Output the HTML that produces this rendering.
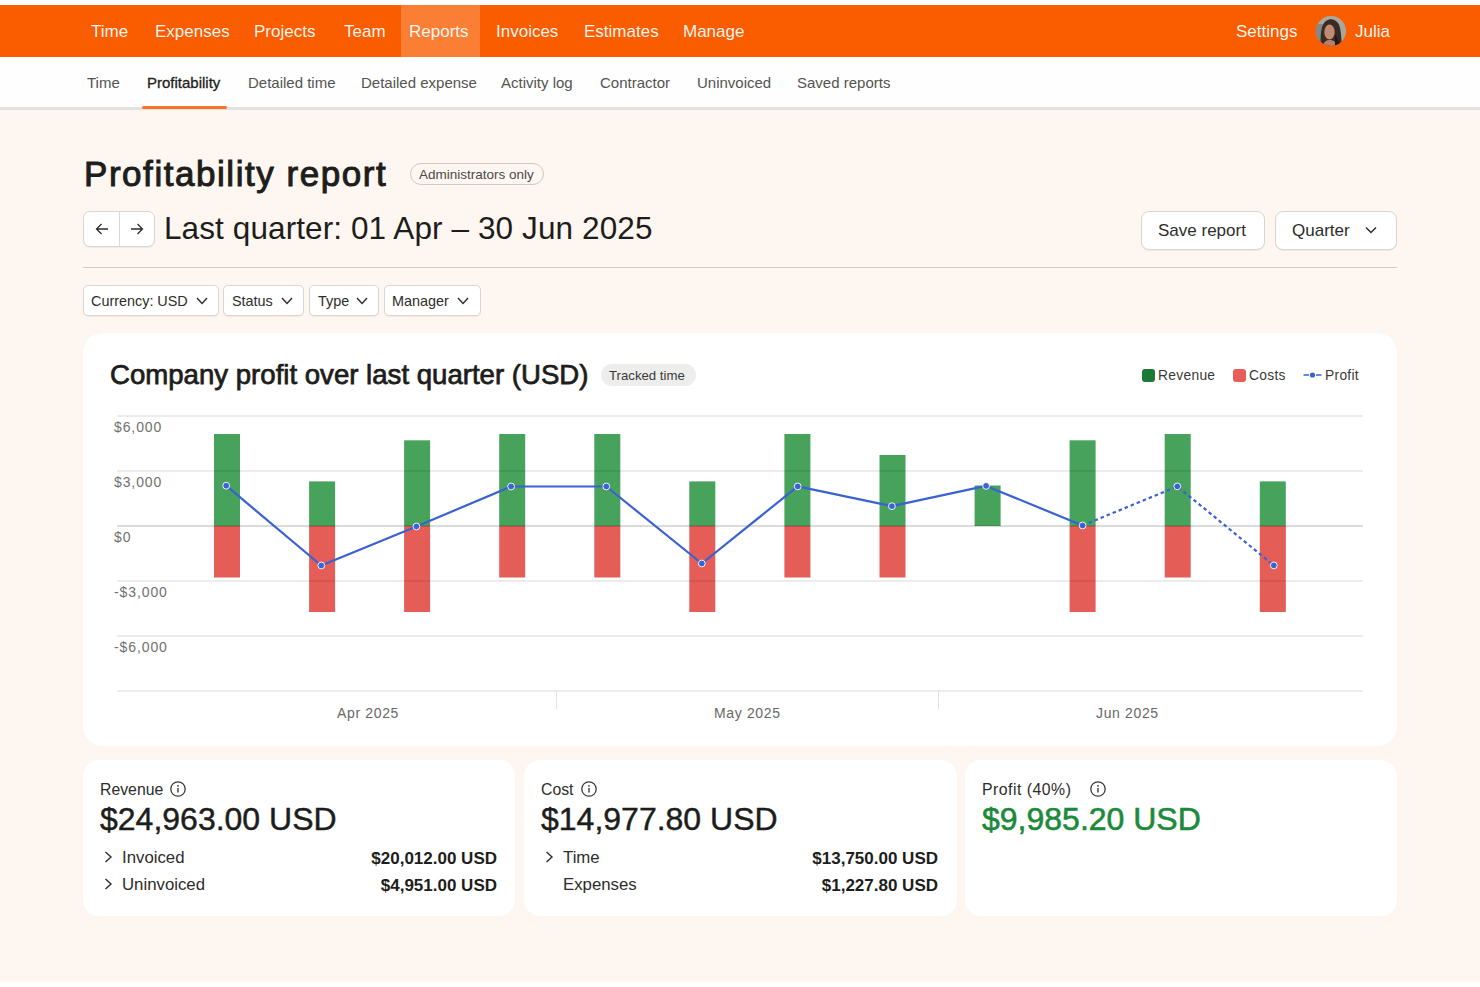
<!DOCTYPE html>
<html><head><meta charset="utf-8">
<style>
*{box-sizing:border-box;margin:0;padding:0}
html,body{width:1480px;height:987px;overflow:hidden;background:#fff;font-family:"Liberation Sans",sans-serif;color:#1d1d1b}
.a{position:absolute;white-space:nowrap;line-height:1}
#top{position:absolute;left:0;top:5px;width:1480px;height:52px;background:#fa5d00}
#top .a{color:rgba(255,255,255,0.95);font-size:17px;top:18px}
#hl{position:absolute;left:401px;top:0;width:79px;height:52px;background:#fb7e35}
#sub{position:absolute;left:0;top:57px;width:1480px;height:53px;background:#fefefe;border-bottom:3px solid #e3e2e0}
#sub .a{color:#545452;font-size:15px;top:18px}
#cream{position:absolute;left:0;top:110px;width:1480px;height:872px;background:#fef6f0}
.btn{position:absolute;background:#fff;border:1px solid #d9d5d0;border-radius:6px;box-shadow:0 1px 1px rgba(60,40,20,0.06)}
.card{position:absolute;background:#fff;border-radius:20px}
svg{position:absolute;overflow:visible}
.cnum{-webkit-text-stroke:0.45px currentColor}
</style></head><body>
<div id="top">
  <div id="hl"></div>
  <div class="a" style="left:91px">Time</div>
  <div class="a" style="left:155px">Expenses</div>
  <div class="a" style="left:254px">Projects</div>
  <div class="a" style="left:344px">Team</div>
  <div class="a" style="left:409px">Reports</div>
  <div class="a" style="left:496px">Invoices</div>
  <div class="a" style="left:584px">Estimates</div>
  <div class="a" style="left:683px">Manage</div>
  <div class="a" style="left:1236px">Settings</div>
  <svg style="left:1316px;top:11px" width="30" height="30" viewBox="0 0 30 30"><defs><clipPath id="av"><circle cx="15" cy="15" r="15"/></clipPath></defs><g clip-path="url(#av)"><rect width="30" height="30" fill="#a9a89e"/><rect x="0" y="8" width="7" height="22" fill="#7d8a8c"/><path d="M5 30C4 20 5 8 10 5c4-3 9-2 12 2 3 4 3 12 4 23z" fill="#3a2c24"/><ellipse cx="13.5" cy="16" rx="5.2" ry="7.5" fill="#c28a72"/><path d="M7 30c1-5 4-6 7-6s6 2 7 6z" fill="#b88068"/><path d="M19 18c2 4 4 8 6 12h-6z" fill="#221a16"/></g></svg>
  <div class="a" style="left:1355px">Julia</div>
</div>
<div id="sub">
  <div class="a" style="left:87px">Time</div>
  <div class="a" style="left:147px;color:#1d1d1b;-webkit-text-stroke:0.3px #1d1d1b">Profitability</div>
  <div class="a" style="left:248px">Detailed time</div>
  <div class="a" style="left:361px">Detailed expense</div>
  <div class="a" style="left:501px">Activity log</div>
  <div class="a" style="left:600px">Contractor</div>
  <div class="a" style="left:697px">Uninvoiced</div>
  <div class="a" style="left:797px">Saved reports</div>
  <div style="position:absolute;left:142px;top:49px;width:85px;height:3px;background:#fb7326;border-radius:2px"></div>
</div>
<div id="cream">
</div>

<div class="a" style="left:84px;top:156px;font-size:35px;letter-spacing:1.55px;-webkit-text-stroke:1px #1d1d1b;color:#1d1d1b">Profitability report</div>
<div style="position:absolute;left:410px;top:163px;width:134px;height:22px;border:1px solid #cfcac4;border-radius:11px"></div>
<div class="a" style="left:419px;top:168px;font-size:13.5px;color:#4a4a48">Administrators only</div>
<div class="btn" style="left:83px;top:211px;width:72px;height:36px;border-radius:7px"></div>
<div style="position:absolute;left:119px;top:212px;width:1px;height:34px;background:#dcd8d3"></div>
<svg style="left:95px;top:222px" width="14" height="14" viewBox="0 0 14 14"><path d="M13 7H1.5M6.5 2L1.5 7l5 5" fill="none" stroke="#2d2d2b" stroke-width="1.3"/></svg>
<svg style="left:130px;top:222px" width="14" height="14" viewBox="0 0 14 14"><path d="M1 7h11.5M7.5 2l5 5-5 5" fill="none" stroke="#2d2d2b" stroke-width="1.3"/></svg>
<div class="a" style="left:164px;top:213px;font-size:31.5px;letter-spacing:0.1px;color:#1d1d1b">Last quarter: 01 Apr – 30 Jun 2025</div>
<div class="btn" style="left:1141px;top:211px;width:124px;height:39px;border-radius:8px"></div>
<div class="a" style="left:1158px;top:222px;font-size:17px;color:#2d2d2b">Save report</div>
<div class="btn" style="left:1275px;top:211px;width:122px;height:39px;border-radius:8px"></div>
<div class="a" style="left:1292px;top:222px;font-size:17px;color:#2d2d2b">Quarter</div>
<svg style="left:1365px;top:226px" width="12" height="8" viewBox="0 0 12 8"><path d="M1 1.5l5 5 5-5" fill="none" stroke="#2d2d2b" stroke-width="1.5"/></svg>
<div style="position:absolute;left:83px;top:267px;width:1314px;height:1px;background:#d2ccc6"></div>
<div class="btn" style="left:83px;top:285px;width:136px;height:31px;border-radius:5px"></div>
<div class="a" style="left:91px;top:294px;font-size:14.4px;color:#2d2d2b">Currency: USD</div>
<svg style="left:196px;top:297px" width="12" height="8" viewBox="0 0 12 8"><path d="M1 1l5 5.5 5-5.5" fill="none" stroke="#2d2d2b" stroke-width="1.4"/></svg>
<div class="btn" style="left:223px;top:285px;width:81px;height:31px;border-radius:5px"></div>
<div class="a" style="left:232px;top:294px;font-size:14.4px;color:#2d2d2b">Status</div>
<svg style="left:281px;top:297px" width="12" height="8" viewBox="0 0 12 8"><path d="M1 1l5 5.5 5-5.5" fill="none" stroke="#2d2d2b" stroke-width="1.4"/></svg>
<div class="btn" style="left:309px;top:285px;width:70px;height:31px;border-radius:5px"></div>
<div class="a" style="left:318px;top:294px;font-size:14.4px;color:#2d2d2b">Type</div>
<svg style="left:356px;top:297px" width="12" height="8" viewBox="0 0 12 8"><path d="M1 1l5 5.5 5-5.5" fill="none" stroke="#2d2d2b" stroke-width="1.4"/></svg>
<div class="btn" style="left:384px;top:285px;width:97px;height:31px;border-radius:5px"></div>
<div class="a" style="left:392px;top:294px;font-size:14.4px;color:#2d2d2b">Manager</div>
<svg style="left:457px;top:297px" width="12" height="8" viewBox="0 0 12 8"><path d="M1 1l5 5.5 5-5.5" fill="none" stroke="#2d2d2b" stroke-width="1.4"/></svg>

<div class="card" style="left:83px;top:333px;width:1314px;height:413px"></div>
<div class="a" style="left:110px;top:361px;font-size:27.6px;letter-spacing:0px;-webkit-text-stroke:0.75px #1d1d1b;color:#1d1d1b">Company profit over last quarter (USD)</div>
<div style="position:absolute;left:601px;top:364px;width:95px;height:22px;border-radius:11px;background:#ededec"></div>
<div class="a" style="left:609px;top:369px;font-size:13.2px;color:#3a3a38">Tracked time</div>
<div style="position:absolute;left:1142px;top:369px;width:13px;height:13px;border-radius:3px;background:#1b7a34"></div>
<div class="a" style="left:1158px;top:369px;font-size:13.8px;letter-spacing:0.3px;color:#3a3a38">Revenue</div>
<div style="position:absolute;left:1233px;top:369px;width:13px;height:13px;border-radius:3px;background:#e85d57"></div>
<div class="a" style="left:1249px;top:369px;font-size:13.8px;letter-spacing:0.3px;color:#3a3a38">Costs</div>
<svg style="left:1303px;top:370px" width="19" height="10" viewBox="0 0 19 10"><path d="M0.5 5h5.5M13 5h5.5" stroke="#3a62d2" stroke-width="1.6"/><circle cx="9.5" cy="5" r="2.6" fill="#3a62d2"/></svg>
<div class="a" style="left:1325px;top:369px;font-size:13.8px;letter-spacing:0.3px;color:#3a3a38">Profit</div>
<div class="a" style="left:114px;top:420px;font-size:14px;letter-spacing:0.9px;color:#717170">$6,000</div>
<div class="a" style="left:114px;top:475px;font-size:14px;letter-spacing:0.9px;color:#717170">$3,000</div>
<div class="a" style="left:114px;top:530px;font-size:14px;letter-spacing:0.9px;color:#717170">$0</div>
<div class="a" style="left:114px;top:585px;font-size:14px;letter-spacing:0.9px;color:#717170">-$3,000</div>
<div class="a" style="left:114px;top:640px;font-size:14px;letter-spacing:0.9px;color:#717170">-$6,000</div>
<div class="a" style="left:337px;top:706px;font-size:14px;letter-spacing:0.65px;color:#686866">Apr 2025</div>
<div class="a" style="left:714px;top:706px;font-size:14px;letter-spacing:0.65px;color:#686866">May 2025</div>
<div class="a" style="left:1096px;top:706px;font-size:14px;letter-spacing:0.65px;color:#686866">Jun 2025</div>
<svg style="left:0;top:0" width="1480" height="987" viewBox="0 0 1480 987">
<rect x="214.0" y="434" width="26" height="92.0" fill="#47a35b"/>
<rect x="214.0" y="526" width="26" height="51.5" fill="#e55d57"/>
<rect x="309.1" y="481.4" width="26" height="44.6" fill="#47a35b"/>
<rect x="309.1" y="526" width="26" height="86.0" fill="#e55d57"/>
<rect x="404.1" y="440.3" width="26" height="85.7" fill="#47a35b"/>
<rect x="404.1" y="526" width="26" height="86.0" fill="#e55d57"/>
<rect x="499.2" y="434" width="26" height="92.0" fill="#47a35b"/>
<rect x="499.2" y="526" width="26" height="51.5" fill="#e55d57"/>
<rect x="594.3" y="434" width="26" height="92.0" fill="#47a35b"/>
<rect x="594.3" y="526" width="26" height="51.5" fill="#e55d57"/>
<rect x="689.3" y="481.4" width="26" height="44.6" fill="#47a35b"/>
<rect x="689.3" y="526" width="26" height="86.0" fill="#e55d57"/>
<rect x="784.4" y="434" width="26" height="92.0" fill="#47a35b"/>
<rect x="784.4" y="526" width="26" height="51.5" fill="#e55d57"/>
<rect x="879.5" y="455" width="26" height="71.0" fill="#47a35b"/>
<rect x="879.5" y="526" width="26" height="51.5" fill="#e55d57"/>
<rect x="974.6" y="485.5" width="26" height="40.5" fill="#47a35b"/>
<rect x="1069.6" y="440.3" width="26" height="85.7" fill="#47a35b"/>
<rect x="1069.6" y="526" width="26" height="86.0" fill="#e55d57"/>
<rect x="1164.7" y="434" width="26" height="92.0" fill="#47a35b"/>
<rect x="1164.7" y="526" width="26" height="51.5" fill="#e55d57"/>
<rect x="1259.8" y="481.4" width="26" height="44.6" fill="#47a35b"/>
<rect x="1259.8" y="526" width="26" height="86.0" fill="#e55d57"/>
<line x1="117" y1="416" x2="1363" y2="416" stroke="#000" stroke-opacity="0.075" stroke-width="2"/><line x1="117" y1="471" x2="1363" y2="471" stroke="#000" stroke-opacity="0.075" stroke-width="2"/><line x1="117" y1="581" x2="1363" y2="581" stroke="#000" stroke-opacity="0.075" stroke-width="2"/><line x1="117" y1="636" x2="1363" y2="636" stroke="#000" stroke-opacity="0.075" stroke-width="2"/><line x1="117" y1="691" x2="1363" y2="691" stroke="#000" stroke-opacity="0.075" stroke-width="2"/><line x1="117" y1="526" x2="1363" y2="526" stroke="#000" stroke-opacity="0.14" stroke-width="2"/>
<line x1="556.5" y1="691.5" x2="556.5" y2="709" stroke="#e3e3e3" stroke-width="1"/>
<line x1="938.5" y1="691.5" x2="938.5" y2="709" stroke="#e3e3e3" stroke-width="1"/>
<polyline points="226.2,485.7 321.3,565.5 416.4,526.5 511.1,486.5 606.3,486.5 701.8,563.5 797.7,486.4 891.9,506.2 986.1,485.9 1082.6,525.5" fill="none" stroke="#3a62d2" stroke-width="2.2" stroke-linejoin="round"/>
<polyline points="1082.6,525.5 1177.3,486.4 1273.8,565.4" fill="none" stroke="#3a62d2" stroke-width="2.2" stroke-dasharray="3.5 3"/>
<circle cx="226.2" cy="485.7" r="3.4" fill="#3a62d2" stroke="#fff" stroke-width="0.9"/>
<circle cx="321.3" cy="565.5" r="3.4" fill="#3a62d2" stroke="#fff" stroke-width="0.9"/>
<circle cx="416.4" cy="526.5" r="3.4" fill="#3a62d2" stroke="#fff" stroke-width="0.9"/>
<circle cx="511.1" cy="486.5" r="3.4" fill="#3a62d2" stroke="#fff" stroke-width="0.9"/>
<circle cx="606.3" cy="486.5" r="3.4" fill="#3a62d2" stroke="#fff" stroke-width="0.9"/>
<circle cx="701.8" cy="563.5" r="3.4" fill="#3a62d2" stroke="#fff" stroke-width="0.9"/>
<circle cx="797.7" cy="486.4" r="3.4" fill="#3a62d2" stroke="#fff" stroke-width="0.9"/>
<circle cx="891.9" cy="506.2" r="3.4" fill="#3a62d2" stroke="#fff" stroke-width="0.9"/>
<circle cx="986.1" cy="485.9" r="3.4" fill="#3a62d2" stroke="#fff" stroke-width="0.9"/>
<circle cx="1082.6" cy="525.5" r="3.4" fill="#3a62d2" stroke="#fff" stroke-width="0.9"/>
<circle cx="1177.3" cy="486.4" r="3.4" fill="#3a62d2" stroke="#fff" stroke-width="0.9"/>
<circle cx="1273.8" cy="565.4" r="3.4" fill="#3a62d2" stroke="#fff" stroke-width="0.9"/>
</svg>

<div class="card" style="left:83px;top:760px;width:432px;height:156px;border-radius:16px"></div>
<div class="card" style="left:524px;top:760px;width:433px;height:156px;border-radius:16px"></div>
<div class="card" style="left:965px;top:760px;width:432px;height:156px;border-radius:16px"></div>
<div class="a" style="left:100px;top:782px;font-size:15.8px;color:#2d2d2b">Revenue</div>
<svg style="left:170px;top:781px" width="16" height="16" viewBox="0 0 16 16"><circle cx="8" cy="8" r="7.2" fill="none" stroke="#3a3a38" stroke-width="1.3"/><path d="M8 7v4.5" stroke="#3a3a38" stroke-width="1.4"/><circle cx="8" cy="4.8" r="0.9" fill="#3a3a38"/></svg>
<div class="a cnum" style="left:100px;top:803px;font-size:32px;color:#1d1d1b">$24,963.00 USD</div>
<svg style="left:104px;top:851px" width="9" height="12" viewBox="0 0 9 12"><path d="M1.5 1l5.5 5-5.5 5" fill="none" stroke="#2d2d2b" stroke-width="1.4"/></svg>
<div class="a" style="left:122px;top:850px;font-size:16.8px;color:#2d2d2b">Invoiced</div>
<div class="a" style="right:983px;top:850px;font-size:17px;font-weight:700;color:#1d1d1b">$20,012.00 USD</div>
<svg style="left:104px;top:878px" width="9" height="12" viewBox="0 0 9 12"><path d="M1.5 1l5.5 5-5.5 5" fill="none" stroke="#2d2d2b" stroke-width="1.4"/></svg>
<div class="a" style="left:122px;top:877px;font-size:16.8px;color:#2d2d2b">Uninvoiced</div>
<div class="a" style="right:983px;top:877px;font-size:17px;font-weight:700;color:#1d1d1b">$4,951.00 USD</div>

<div class="a" style="left:541px;top:782px;font-size:15.8px;color:#2d2d2b">Cost</div>
<svg style="left:581px;top:781px" width="16" height="16" viewBox="0 0 16 16"><circle cx="8" cy="8" r="7.2" fill="none" stroke="#3a3a38" stroke-width="1.3"/><path d="M8 7v4.5" stroke="#3a3a38" stroke-width="1.4"/><circle cx="8" cy="4.8" r="0.9" fill="#3a3a38"/></svg>
<div class="a cnum" style="left:541px;top:803px;font-size:32px;color:#1d1d1b">$14,977.80 USD</div>
<svg style="left:545px;top:851px" width="9" height="12" viewBox="0 0 9 12"><path d="M1.5 1l5.5 5-5.5 5" fill="none" stroke="#2d2d2b" stroke-width="1.4"/></svg>
<div class="a" style="left:563px;top:850px;font-size:16.8px;color:#2d2d2b">Time</div>
<div class="a" style="right:542px;top:850px;font-size:17px;font-weight:700;color:#1d1d1b">$13,750.00 USD</div>
<div class="a" style="left:563px;top:877px;font-size:16.8px;color:#2d2d2b">Expenses</div>
<div class="a" style="right:542px;top:877px;font-size:17px;font-weight:700;color:#1d1d1b">$1,227.80 USD</div>

<div class="a" style="left:982px;top:782px;font-size:15.8px;letter-spacing:0.5px;color:#2d2d2b">Profit (40%)</div>
<svg style="left:1090px;top:781px" width="16" height="16" viewBox="0 0 16 16"><circle cx="8" cy="8" r="7.2" fill="none" stroke="#3a3a38" stroke-width="1.3"/><path d="M8 7v4.5" stroke="#3a3a38" stroke-width="1.4"/><circle cx="8" cy="4.8" r="0.9" fill="#3a3a38"/></svg>
<div class="a cnum" style="left:982px;top:803px;font-size:32px;color:#1b8a3a;-webkit-text-stroke:0.6px #1b8a3a">$9,985.20 USD</div>

</body></html>
